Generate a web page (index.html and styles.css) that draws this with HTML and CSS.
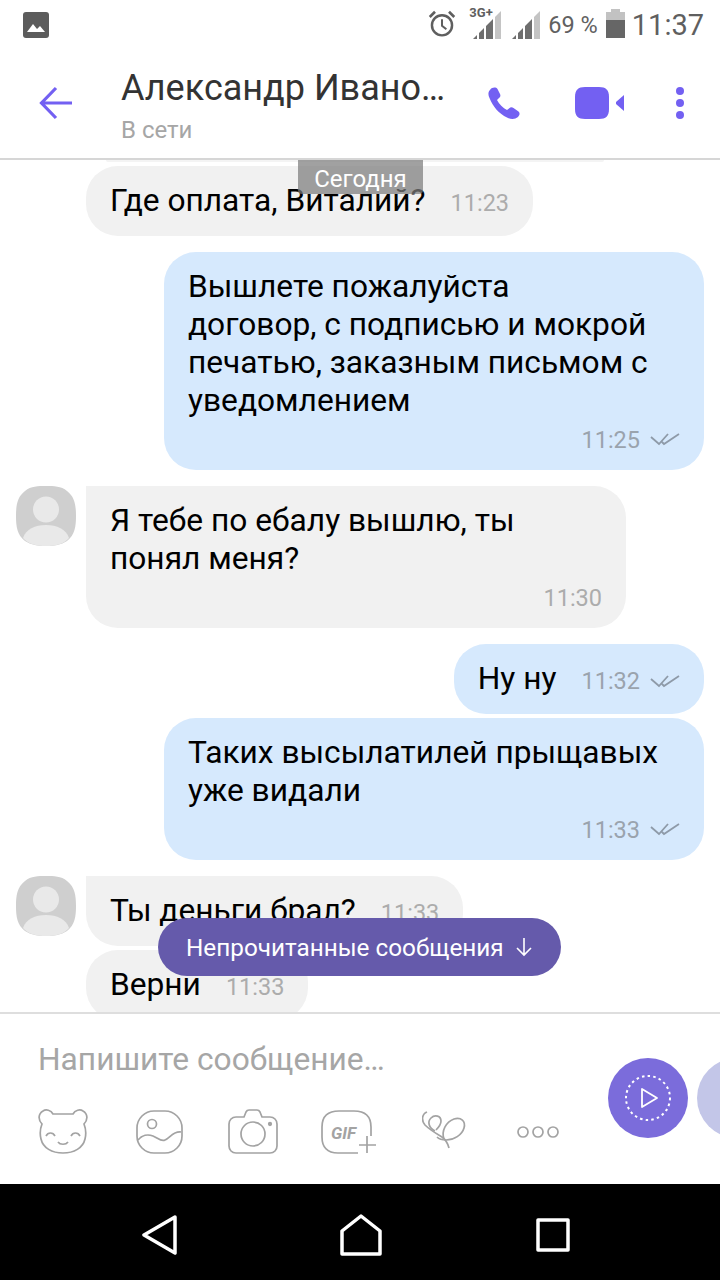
FILE: index.html
```html
<!DOCTYPE html>
<html lang="ru">
<head>
    <meta charset="UTF-8">
    <meta name="viewport" content="width=device-width, initial-scale=1.0">
    <title>Чат</title>
    <link rel="stylesheet" href="styles.css">
</head>
<body>
    <div class="screen">
        <!-- status bar -->
        <div class="status-bar">
            <svg class="status-picture" width="26" height="26" viewBox="0 0 26 26"><rect width="26" height="26" rx="3" fill="#5c5c5c"/><path d="M4 20l6-8 4 5 3-3 5 6z" fill="#fff"/></svg>
            <div class="status-right">
                <svg class="status-alarm" width="28" height="28" viewBox="0 0 32 32" fill="none" stroke="#5f5f5f"><circle cx="16" cy="17.500" r="11.500" stroke-width="2.800"/><path d="M16 10.500v7.500l5 4" stroke-width="2.300"/><path d="M2 8l6-6M30 8l-6-6" stroke-width="3"/></svg>
                <div class="signal-3g">
                    <span class="signal-label">3G+</span>
                    <svg width="29" height="28" viewBox="0 0 29 28"><path d="M0 28l4-4v4z M6 28v-6l5-5v11z M13 28V15l7-7v20z" fill="#6e6e6e"/><path d="M22 28V6l6-6v28z" fill="#c4c4c4"/></svg>
                </div>
                <svg class="signal" width="29" height="28" viewBox="0 0 29 28"><path d="M0 28l4-4v4z M6 28v-6l5-5v11z M13 28V15l7-7v20z" fill="#6e6e6e"/><path d="M22 28V6l6-6v28z" fill="#c4c4c4"/></svg>
                <span class="battery-text">69 %</span>
                <svg class="battery" width="19" height="29" viewBox="0 0 19 29"><path d="M5 0h9v3h5v8H0V3h5z" fill="#c2c2c2"/><rect y="11" width="19" height="18" fill="#666"/></svg>
                <span class="clock">11:37</span>
            </div>
        </div>

        <!-- header -->
        <div class="header">
            <svg class="header-back" width="34" height="34" viewBox="0 0 34 34" fill="none" stroke="#7360f2" stroke-width="3.200"><path d="M33 17H3M17 2L2.500 17 17 32"/></svg>
            <div class="header-title">
                <div class="contact-name">Александр Ивано…</div>
                <div class="contact-status">В сети</div>
            </div>
            <svg class="header-phone" width="32" height="32" viewBox="0 0 32 32" fill="#7360f2"><path d="M2 3C4 0 8 0 9.500 2L12 7c1 2 0 3.500-1.500 4.500L9 13c2 4 6 8 10 10l2-1.500c1.500-1.500 3-1.500 4.500-.5l5 3.500c1.500 1.500 1.500 3.500-.5 5.500-3 2.500-7 2.500-11 .5C11 26.500 5 20 1.500 11 0 8 0 5 2 3z"/></svg>
            <svg class="header-video" width="52" height="34" viewBox="0 0 52 34" fill="#7360f2"><path d="M11 1h14c7 0 10 3 10 10v12c0 7-3 10-10 10H11C4 33 1 30 1 23V11C1 4 4 1 11 1z"/><path d="M50 9v16l-8-7v-2z"/></svg>
            <div class="header-dots"><span></span><span></span><span></span></div>
        </div>

        <!-- messages -->
        <div class="chat">
            <div class="prev-edge"></div>

            <div class="row">
                <div class="bubble in single">
                    <span class="text">Где оплата, Виталий?</span>
                    <span class="time">11:23</span>
                </div>
            </div>

            <div class="row out">
                <div class="bubble own wide">
                    <div class="text">Вышлете пожалуйста<br>договор, с подписью и мокрой печатью, заказным письмом с уведомлением</div>
                    <div class="meta">
                        <span class="time">11:25</span>
                        <svg class="ticks" width="30" height="14" viewBox="0 0 30 14" fill="none" stroke="#8e9aa8" stroke-width="1.800"><path d="M1 5l8 7L18 2M12 10l2 2L29 2"/></svg>
                    </div>
                </div>
            </div>

            <div class="row">
                <div class="avatar"><svg width="60" height="60" viewBox="0 0 60 60"><path d="M30 0c8 0 15 0 21 5 8 6 9 15 9 25s-1 19-9 25c-6 4-13 5-21 5s-15-1-21-5C1 49 0 40 0 30S1 11 9 5c6-5 13-5 21-5z" fill="#cfcfcf"/><ellipse cx="30" cy="23.500" rx="13" ry="13" fill="#e9e9e9"/><path d="M7 52c3-9 12-13 23-13s20 4 23 13c-5 6-13 8-23 8S12 58 7 52z" fill="#e9e9e9"/></svg></div>
                <div class="bubble in first wide">
                    <div class="text">Я тебе по ебалу вышлю, ты понял меня?</div>
                    <div class="meta"><span class="time">11:30</span></div>
                </div>
            </div>

            <div class="row out">
                <div class="bubble own single">
                    <span class="text">Ну ну</span>
                    <span class="time">11:32</span>
                    <svg class="ticks" width="30" height="14" viewBox="0 0 30 14" fill="none" stroke="#8e9aa8" stroke-width="1.800"><path d="M1 5l8 7L18 2M12 10l2 2L29 2"/></svg>
                </div>
            </div>

            <div class="row out tight">
                <div class="bubble own wide">
                    <div class="text">Таких высылатилей прыщавых уже видали</div>
                    <div class="meta">
                        <span class="time">11:33</span>
                        <svg class="ticks" width="30" height="14" viewBox="0 0 30 14" fill="none" stroke="#8e9aa8" stroke-width="1.800"><path d="M1 5l8 7L18 2M12 10l2 2L29 2"/></svg>
                    </div>
                </div>
            </div>

            <div class="row">
                <div class="avatar"><svg width="60" height="60" viewBox="0 0 60 60"><path d="M30 0c8 0 15 0 21 5 8 6 9 15 9 25s-1 19-9 25c-6 4-13 5-21 5s-15-1-21-5C1 49 0 40 0 30S1 11 9 5c6-5 13-5 21-5z" fill="#cfcfcf"/><ellipse cx="30" cy="23.500" rx="13" ry="13" fill="#e9e9e9"/><path d="M7 52c3-9 12-13 23-13s20 4 23 13c-5 6-13 8-23 8S12 58 7 52z" fill="#e9e9e9"/></svg></div>
                <div class="bubble in first single">
                    <span class="text">Ты деньги брал?</span>
                    <span class="time">11:33</span>
                </div>
            </div>

            <div class="row tight">
                <div class="bubble in single">
                    <span class="text">Верни</span>
                    <span class="time">11:33</span>
                </div>
            </div>

            <div class="date-tag">Сегодня</div>
            <div class="unread-pill">
                <span>Непрочитанные сообщения</span>
                <svg width="20" height="20" viewBox="0 0 20 20" fill="none" stroke="#fff" stroke-width="1.600"><path d="M10 1v17M3 11l7 7 7-7"/></svg>
            </div>
        </div>

        <!-- composer -->
        <div class="composer">
            <div class="placeholder">Напишите сообщение…</div>
            <div class="tools">
                <svg width="52" height="46" viewBox="0 0 52 46" fill="none" stroke="#a3a3a3" stroke-width="1.700"><path d="M15 5H35C37 1 42 0 45 2 50 5 50 11 46 15 48 20 48 26 47 30 45 39 36 44 25 44 14 44 5 39 3 30 2 26 2 20 4 15 0 11 0 5 5 2 8 0 13 1 15 5z"/><path d="M8 27c2-4 7-4 9 0M33 27c2-4 7-4 9 0M20 33c2 3 8 3 10 0"/></svg>
                <svg width="48" height="46" viewBox="0 0 48 46" fill="none" stroke="#a3a3a3" stroke-width="1.700"><rect x="2" y="2" width="45" height="42" rx="17"/><circle cx="17" cy="15" r="4.500"/><path d="M3 31C7 26 13 25 18 27 23 29 26 33 30 31 35 29 38 22 46 23"/></svg>
                <svg width="50" height="46" viewBox="0 0 50 46" fill="none" stroke="#a3a3a3" stroke-width="1.700"><path d="M8 8h8l2-5c.500-1 1-2 3-2h8c2 0 2.500 1 3 2l2 5h8c4 0 7 3 7 7v22c0 4-3 7-7 7H8c-4 0-7-3-7-7V15c0-4 3-7 7-7z"/><circle cx="25" cy="25" r="12"/><circle cx="42" cy="15" r="1.300" fill="#a3a3a3"/></svg>
                <div class="gif-icon">
                    <svg width="56" height="46" viewBox="0 0 56 46" fill="none" stroke="#a3a3a3" stroke-width="1.700"><path d="M37 44H17C6 44 1 38 1 28V18C1 7 7 2 18 2H33C44 2 50 7 50 18V27"/><path d="M46 27V44M38 36H55"/></svg>
                    <span class="gif-label">GIF</span>
                </div>
                <svg width="46" height="46" viewBox="0 0 46 46" fill="none" stroke="#a3a3a3" stroke-width="1.700"><path d="M5 3C0 5-1 11 3 16 8 21 15 25 20 28 24 31 26 35 27 39"/><path d="M13 22C7 19 5 13 9 9 13 5 19 7 19 12 19 15 16 19 14 21"/><path d="M22 30C19 22 24 13 32 10 39 8 44 12 42 19 40 26 32 31 24 31 20 31 17 30 15 28"/></svg>
                <svg class="tool-more" width="48" height="16" viewBox="0 0 48 16" fill="none" stroke="#a3a3a3" stroke-width="1.700"><circle cx="10" cy="8" r="5"/><circle cx="25" cy="8" r="5"/><circle cx="40" cy="8" r="5"/></svg>
            </div>
            <div class="record-btn">
                <svg width="48" height="48" viewBox="0 0 48 48" fill="none" stroke="#fff"><circle cx="24" cy="24" r="22" stroke-width="2" stroke-dasharray="2.500 3.200"/><path d="M18 15l15 9-15 9z" stroke-width="1.800" stroke-linejoin="round"/></svg>
            </div>
            <div class="next-btn"></div>
        </div>

        <!-- nav bar -->
        <div class="nav-bar">
            <svg width="36" height="40" viewBox="0 0 36 40" fill="none" stroke="#fff" stroke-width="3.500" stroke-linejoin="round"><path d="M33 2L2 20l31 18z"/></svg>
            <svg class="nav-home" width="42" height="42" viewBox="0 0 42 42" fill="none" stroke="#fff" stroke-width="3.500" stroke-linejoin="round"><path d="M21 2L40 17v23H2V17z"/></svg>
            <svg class="nav-recent" width="34" height="34" viewBox="0 0 34 34" fill="none" stroke="#fff" stroke-width="3.500" stroke-linejoin="round"><rect x="2" y="2" width="30" height="30"/></svg>
        </div>
    </div>
</body>
</html>
```

FILE: styles.css
```css
body, html {
    margin: 0;
    padding: 0;
    width: 720px;
    height: 1280px;
    overflow: hidden;
    background-color: #fff;
    font-family: Roboto, "Noto Sans", sans-serif;
}
.screen {
    display: flex;
    flex-direction: column;
    width: 720px;
    height: 1280px;
}

/* status bar */
.status-bar {
    display: flex;
    align-items: center;
    justify-content: space-between;
    height: 50px;
    padding: 0 16px 0 23px;
    flex-shrink: 0;
}
.status-right {
    display: flex;
    align-items: center;
}
.status-alarm {
    margin-bottom: 2px;
}
.signal-3g {
    position: relative;
    margin-left: 17px;
    height: 28px;
}
.signal {
    margin-left: 10px;
}
.signal-label {
    position: absolute;
    left: -4px;
    top: -6px;
    font-size: 13px;
    font-weight: 700;
    color: #5f5f5f;
}
.battery-text {
    font-size: 23.500px;
    color: #616161;
    margin-left: 7px;
    margin-right: 8px;
}
.battery {
    margin-bottom: 3px;
}
.clock {
    font-size: 29px;
    color: #5f5f5f;
    margin-left: 7px;
}

/* header */
.header {
    display: flex;
    align-items: center;
    height: 110px;
    box-sizing: border-box;
    border-bottom: 2px solid #d6d6d6;
    flex-shrink: 0;
    padding-bottom: 4px;
}
.header-back {
    margin-left: 39px;
    margin-top: 2px;
}
.header-title {
    margin-left: 48px;
    margin-top: 8px;
    width: 367px;
}
.contact-name {
    font-size: 36px;
    line-height: 40px;
    color: #333;
    white-space: nowrap;
}
.contact-status {
    font-size: 24px;
    line-height: 28px;
    color: #a6a6a6;
    margin-top: 8px;
}
.header-phone {
    margin-top: 2px;
}
.header-video {
    margin-left: 54px;
    margin-top: 2px;
}
.header-dots {
    display: flex;
    flex-direction: column;
    gap: 4px;
    margin-left: 50px;
    margin-top: 2px;
}
.header-dots span {
    width: 8px;
    height: 8px;
    border-radius: 50%;
    background-color: #7360f2;
}

/* chat */
.chat {
    position: relative;
    flex: 1;
    overflow: hidden;
    min-height: 0;
    display: flex;
    flex-direction: column;
    padding: 0 16px;
}
.prev-edge {
    flex-shrink: 0;
    height: 2px;
    margin: 0 100px 4px 90px;
    background-color: #f4f4f4;
    border-radius: 0 0 10px 10px;
}
.row {
    display: flex;
    flex-shrink: 0;
    padding-left: 70px;
    margin-bottom: 16px;
}
.row.out {
    justify-content: flex-end;
    padding-left: 0;
}
.row.tight {
    margin-top: -12px;
}
.row:has(.avatar) {
    padding-left: 0;
}
.avatar {
    width: 60px;
    height: 60px;
    margin-right: 10px;
    flex-shrink: 0;
}
.bubble {
    box-sizing: border-box;
    padding: 16px 24px 12px;
    border-radius: 32px;
    font-size: 31.700px;
    line-height: 38px;
    color: #000;
}
.bubble.in {
    background-color: #f1f1f1;
}
.bubble.own {
    background-color: #d6e9fd;
}
.bubble.first {
    border-top-left-radius: 0;
}
.bubble.single {
    display: flex;
    align-items: center;
    height: 70px;
    padding: 0 24px;
}
.bubble.wide {
    width: 540px;
}
.meta {
    display: flex;
    justify-content: flex-end;
    align-items: center;
    height: 38px;
}
.time {
    font-size: 23.500px;
    color: #acacac;
    margin-left: 25px;
    white-space: nowrap;
}
.meta .time {
    margin-top: 2px;
}
.bubble.own .time {
    color: #9aa3ad;
}
.ticks {
    margin-left: 10px;
    flex-shrink: 0;
}
.bubble.single .time, .bubble.single .ticks {
    margin-top: 4px;
}

/* overlays in chat */
.date-tag {
    position: absolute;
    left: 298px;
    top: 0;
    width: 125px;
    height: 34px;
    text-align: center;
    font-size: 24px;
    line-height: 38px;
    color: #fff;
    background-color: rgba(125, 125, 125, 0.72);
    border-radius: 0 0 4px 4px;
}
.unread-pill {
    position: absolute;
    left: 158px;
    top: 758px;
    width: 403px;
    height: 58px;
    box-sizing: border-box;
    padding: 0 27px 0 28px;
    display: flex;
    align-items: center;
    justify-content: space-between;
    border-radius: 29px;
    background-color: #655aab;
    color: #fff;
    font-size: 24.300px;
}

/* composer */
.composer {
    position: relative;
    height: 172px;
    flex-shrink: 0;
    box-sizing: border-box;
    border-top: 2px solid #dedede;
    padding: 28px 38px 0;
    background-color: #fff;
    overflow: hidden;
}
.placeholder {
    font-size: 31.700px;
    line-height: 36px;
    color: #a6a6a6;
}
.tools {
    display: flex;
    align-items: center;
    gap: 45px;
    margin-top: 31px;
}
.gif-icon {
    position: relative;
    width: 56px;
    height: 46px;
    margin-left: -2px;
}
.gif-label {
    position: absolute;
    left: 10px;
    top: 14px;
    font-size: 17px;
    line-height: 20px;
    font-weight: 700;
    font-style: italic;
    color: #a3a3a3;
}
.record-btn {
    position: absolute;
    left: 608px;
    top: 44px;
    width: 80px;
    height: 80px;
    border-radius: 50%;
    background-color: #7b6cdb;
    display: flex;
    align-items: center;
    justify-content: center;
}
.next-btn {
    position: absolute;
    left: 697px;
    top: 44px;
    width: 80px;
    height: 80px;
    border-radius: 50%;
    background-color: #c3c6e8;
}

/* nav bar */
.nav-bar {
    height: 96px;
    box-sizing: border-box;
    flex-shrink: 0;
    background-color: #000;
    display: flex;
    align-items: center;
    padding: 6px 0 0 142px;
}
.nav-home {
    margin-left: 162px;
}
.nav-recent {
    margin-left: 154px;
}
```
